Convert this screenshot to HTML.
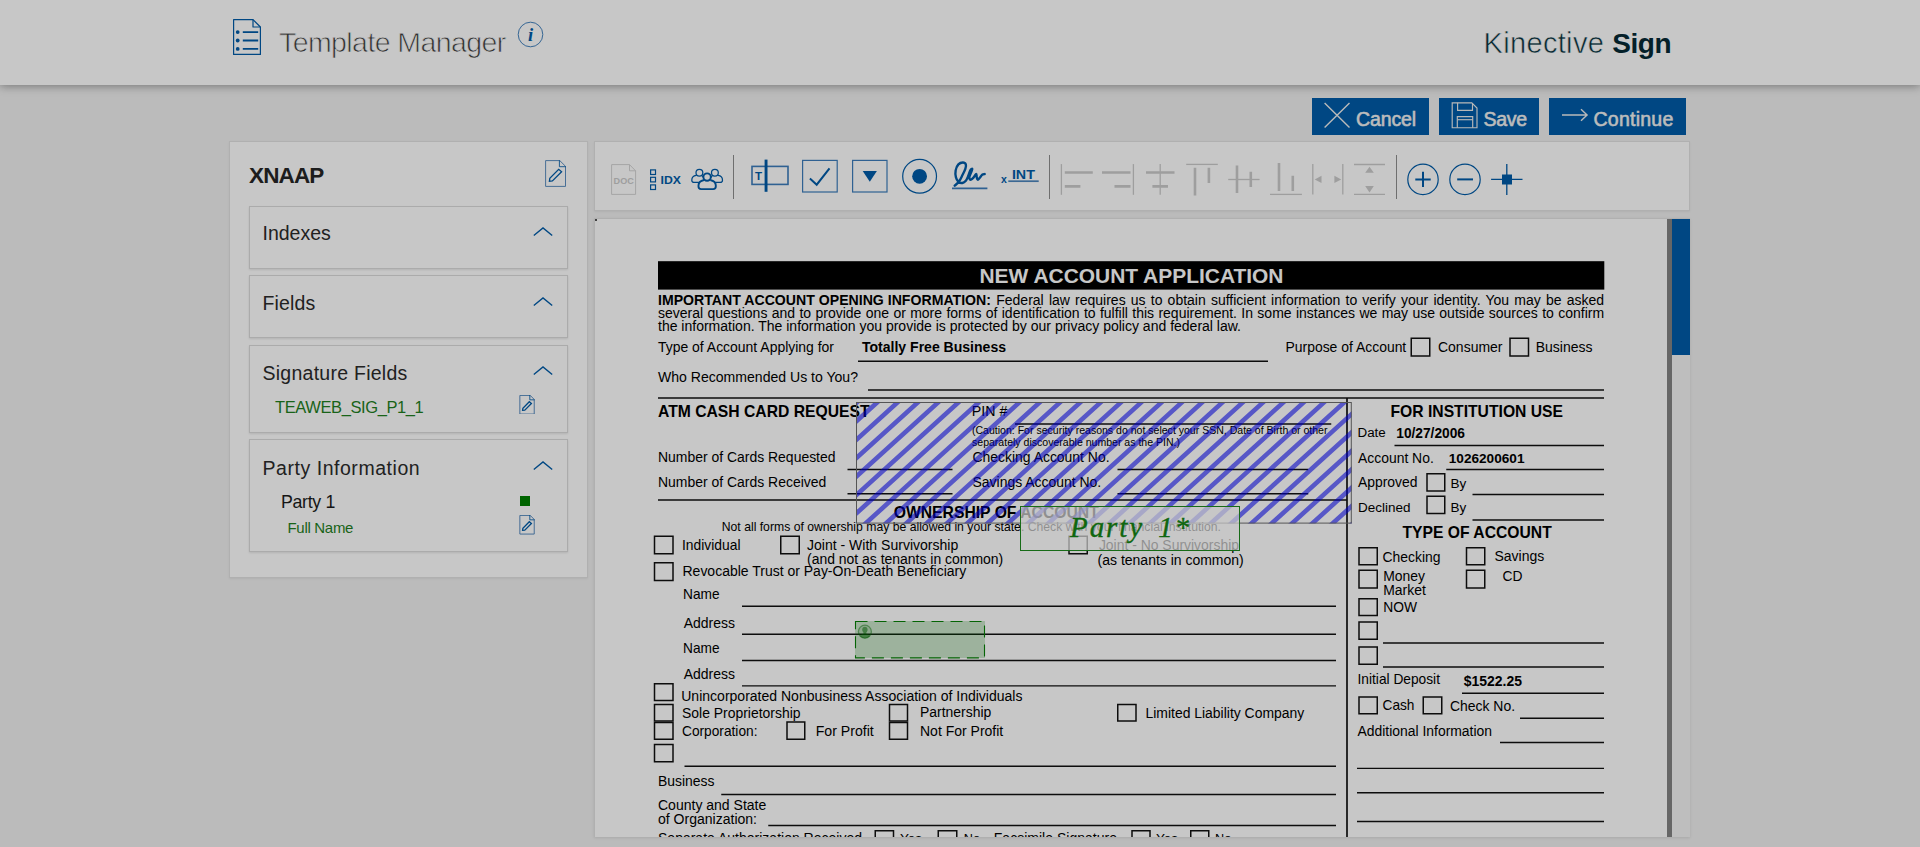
<!DOCTYPE html><html lang="en"><head><meta charset="utf-8"><title>Template Manager</title><style>
*{box-sizing:border-box}
html,body{margin:0;padding:0}
body{width:1920px;height:847px;overflow:hidden;position:relative;background:#f0f0f0;font-family:"Liberation Sans",sans-serif;color:#222}
.abs{position:absolute}
#hdr{left:0;top:0;width:1920px;height:85px;background:#fff;box-shadow:0 1px 9px rgba(0,0,0,.38)}
.t{position:absolute;white-space:nowrap;line-height:1;}
.btn{position:absolute;top:98px;height:37px;background:#015ca8;color:#fff}
.btn .t{font-size:19.5px;font-weight:normal;color:#f1f1f1;-webkit-text-stroke:.55px #f1f1f1}
.panel{position:absolute;background:#fff;border:1px solid #e2e2e2;box-shadow:0 1px 2px rgba(0,0,0,.06)}
.box{position:absolute;left:249px;width:319px;border:1px solid #dcdcdc;background:#fff;box-shadow:0 1px 2px rgba(0,0,0,.10)}
.sep{position:absolute;top:155px;width:1.4px;height:44px;background:#8f8f8f}
</style></head><body>
<div id="hdr" class="abs">
<svg class="abs" style="left:232px;top:18px" width="30" height="38" viewBox="0 0 30 38" fill="none" stroke="#015ca8" stroke-width="1.2" stroke-linejoin="round"><path d="M21 1.6H1.6v34.8h26.8V9z"/><path d="M21 1.6V9h7.4"/><g stroke-width="1.8"><path d="M10.800 14.100h15.400M10.800 22.500h15.400M10.800 30.900h15.400"/></g><g fill="#015ca8" stroke="none"><circle cx="5.700" cy="14.100" r="1.900"/><circle cx="5.700" cy="22.500" r="1.900"/><circle cx="5.700" cy="30.900" r="1.900"/></g></svg>
<span class="t" id="ttl" style="left:279px;top:28.3px;font-size:28.5px;color:#3f3f3f;-webkit-text-stroke:.75px #fff;letter-spacing:-.58px">Template Manager</span>
<svg class="abs" style="left:516.900px;top:20.500px" width="27" height="27" viewBox="0 0 27 27"><circle cx="13.5" cy="13.5" r="12.300" fill="none" stroke="#2f74b5" stroke-width=".9"/><text x="13.500" y="19.600" text-anchor="middle" font-family="'Liberation Serif',serif" font-style="italic" font-weight="bold" font-size="18.500" fill="#015ca8">i</text></svg>
<span class="t" id="kin" style="left:1483.6px;top:28.75px;font-size:29px;color:#0a3440;-webkit-text-stroke:.55px #fff;letter-spacing:.32px">Kinective</span>
<span class="t" id="sgn" style="left:1612.2px;top:29.6px;font-size:28px;font-weight:bold;color:#062a35;letter-spacing:-.4px">Sign</span>
</div>
<div class="btn" style="left:1312px;width:117px"><svg class="abs" style="left:11px;top:4px" width="28" height="27" viewBox="0 0 28 27" stroke="#eee" stroke-width="1.4" fill="none"><path d="M1.6 .9l24.900 24.500M26.500 .9L1.600 25.400"/></svg><span class="t" id="b1" style="left:44px;top:12.3px;letter-spacing:-.1px">Cancel</span></div>
<div class="btn" style="left:1439px;width:100px"><svg class="abs" style="left:12px;top:4px" width="27" height="27" viewBox="0 0 27 27" stroke="#ececec" stroke-width="1.15" fill="none" stroke-linejoin="miter"><path d="M1.2 .8h19.600l5.200 5.200v19.700H1.200z"/><path d="M6.600 .8v7.600h14.900V1.500"/><path d="M6.300 25.700V14.600h15.400v11.100"/><path d="M6.300 17.700h15.400"/></svg><span class="t" id="b2" style="left:44.5px;top:12.3px;letter-spacing:-.3px">Save</span></div>
<div class="btn" style="left:1549px;width:137px"><svg class="abs" style="left:12.700px;top:10px" width="27" height="14" viewBox="0 0 27 14" stroke="#eee" stroke-width="1.4" fill="none"><path d="M0 7h25M19 1.300l6.100 5.700-6.100 5.700"/></svg><span class="t" id="b3" style="left:44.5px;top:12.3px;letter-spacing:.25px">Continue</span></div>
<div class="panel" style="left:229px;top:141px;width:359px;height:437px"></div>
<span class="t" id="xn" style="left:249px;top:165.3px;font-size:22.5px;font-weight:bold;color:#262626;letter-spacing:-.85px">XNAAP</span>
<svg style="position:absolute;left:545px;top:160px" width="21" height="27" viewBox="0 0 21 27" fill="none" stroke="#3f7ab5" stroke-width="0.85" stroke-linejoin="round" stroke-linecap="round"><path d="M14.400 .6H.6v25.800h19.900V6.700z"/><path d="M14.400 .6v6.100h6.100" stroke="#015ca8"/><path d="M4.400 21.300L4.800 18.300 13.700 9.300 16.600 11.800 7.400 21z" stroke="#015ca8" stroke-width="1.275" stroke-linejoin="miter"/></svg>
<div class="box" style="top:206px;height:63px"></div>
<div class="box" style="top:275px;height:63px"></div>
<div class="box" style="top:345px;height:88px"></div>
<div class="box" style="top:439px;height:113px"></div>
<span class="t" id="l1" style="left:262.5px;top:224.39px;font-size:19.5px;color:#2b2b2b;">Indexes</span>
<span class="t" id="l2" style="left:262.5px;top:294.39px;font-size:19.5px;color:#2b2b2b;letter-spacing:.15px">Fields</span>
<span class="t" id="l3" style="left:262.5px;top:363.79px;font-size:19.5px;color:#2b2b2b;letter-spacing:.26px">Signature Fields</span>
<span class="t" id="l4" style="left:262.5px;top:458.79px;font-size:19.5px;color:#2b2b2b;letter-spacing:.54px">Party Information</span>
<span class="t" id="l5" style="left:275px;top:398.93px;font-size:16.5px;color:#1f7f1f;letter-spacing:-.4px">TEAWEB_SIG_P1_1</span>
<span class="t" id="l6" style="left:281px;top:493.77px;font-size:17.75px;color:#1c1c1c;letter-spacing:-.3px">Party 1</span>
<span class="t" id="l7" style="left:287.5px;top:520.20px;font-size:15px;color:#1f7f1f;letter-spacing:-.3px">Full Name</span>
<svg style="position:absolute;left:533px;top:226.5px" width="20" height="10" viewBox="0 0 20 10" fill="none" stroke="#015ca8" stroke-width="1.35"><path d="M.8 8.6L10 .9l9.2 7.7"/></svg>
<svg style="position:absolute;left:533px;top:296.5px" width="20" height="10" viewBox="0 0 20 10" fill="none" stroke="#015ca8" stroke-width="1.35"><path d="M.8 8.6L10 .9l9.2 7.7"/></svg>
<svg style="position:absolute;left:533px;top:366px" width="20" height="10" viewBox="0 0 20 10" fill="none" stroke="#015ca8" stroke-width="1.35"><path d="M.8 8.6L10 .9l9.2 7.7"/></svg>
<svg style="position:absolute;left:533px;top:460.5px" width="20" height="10" viewBox="0 0 20 10" fill="none" stroke="#015ca8" stroke-width="1.35"><path d="M.8 8.6L10 .9l9.2 7.7"/></svg>
<svg style="position:absolute;left:519px;top:394.5px" width="16" height="19.5" viewBox="0 0 21 27" fill="none" stroke="#3f7ab5" stroke-width="1.2" stroke-linejoin="round" stroke-linecap="round"><path d="M14.400 .6H.6v25.800h19.900V6.700z"/><path d="M14.400 .6v6.100h6.100" stroke="#015ca8"/><path d="M4.400 21.300L4.800 18.300 13.700 9.300 16.600 11.800 7.400 21z" stroke="#015ca8" stroke-width="1.7999999999999998" stroke-linejoin="miter"/></svg>
<svg style="position:absolute;left:519px;top:515px" width="16" height="19.5" viewBox="0 0 21 27" fill="none" stroke="#3f7ab5" stroke-width="1.2" stroke-linejoin="round" stroke-linecap="round"><path d="M14.400 .6H.6v25.800h19.900V6.700z"/><path d="M14.400 .6v6.100h6.100" stroke="#015ca8"/><path d="M4.400 21.300L4.800 18.300 13.700 9.300 16.600 11.800 7.400 21z" stroke="#015ca8" stroke-width="1.7999999999999998" stroke-linejoin="miter"/></svg>
<div class="abs" style="left:520px;top:496px;width:10px;height:10px;background:#008000"></div>
<div class="panel" style="left:594px;top:141px;width:1096px;height:70px"></div>
<svg class="abs" style="left:595px;top:142px" width="1096" height="70" viewBox="595 142 1096 70" fill="none" font-family="'Liberation Sans',sans-serif">
<g stroke="#d2d2d2" stroke-width=".95" stroke-linejoin="round"><path d="M611.6 164.6H629.5L635.6 170.8V194.4H611.6z"/><path d="M629.5 164.6V170.8H635.6"/></g>
<text x="613.6" y="183.6" font-size="8.8" font-weight="bold" fill="#cbcbcb" textLength="20.2" lengthAdjust="spacingAndGlyphs">DOC</text>
<g stroke="#015ca8" stroke-width="1.2"><rect x="650.6" y="169.9" width="4.9" height="4.6"/><rect x="650.6" y="177.3" width="4.9" height="4.6"/><rect x="650.6" y="184.9" width="4.9" height="4.6"/></g>
<text x="660.6" y="183.8" font-size="11.3" font-weight="bold" fill="#015ca8" textLength="20.4" lengthAdjust="spacingAndGlyphs">IDX</text>
<g stroke="#015ca8" stroke-width="1.25" stroke-linejoin="round" stroke-linecap="round">
<circle cx="699.4" cy="172.8" r="3.4"/><circle cx="714.9" cy="172.8" r="3.4"/>
<path d="M698.5 182.4H694.2C692.6 182.4 691.8 181.600 691.8 180.200 691.8 177.600 693.600 175.700 696.200 175.400"/>
<path d="M715.800 182.400H720.100C721.700 182.400 722.500 181.600 722.500 180.200 722.500 177.600 720.700 175.700 718.100 175.400"/>
<path d="M701.900 175.600C702.500 176.200 702.900 176.700 703.200 177.300M712.400 175.600C711.800 176.200 711.400 176.700 711.100 177.300"/>
</g>
<g stroke="#015ca8" stroke-width="1.9" stroke-linejoin="round"><circle cx="707.1" cy="177.1" r="3.700"/>
<path d="M704 180C700.600 180.700 698.500 182.900 698.500 185.400V186.600C698.500 188.200 699.500 189.100 701.100 189.100H713.200C714.800 189.100 715.800 188.200 715.800 186.600V185.400C715.800 182.900 713.700 180.700 710.300 180"/></g>
<rect x="752" y="166.4" width="36" height="18" stroke="#3d7dbb" stroke-width="1.6"/><rect x="764.600" y="159.600" width="2.900" height="32.200" fill="#015ca8"/>
<text x="754.900" y="179.900" font-size="11.500" font-weight="bold" fill="#015ca8">T</text>
<rect x="802.6" y="160.4" width="34.6" height="31.6" stroke="#3d7dbb" stroke-width="1.2"/><path d="M809.9 178.6L816.7 184.7L829.5 168.4" stroke="#015ca8" stroke-width="2"/>
<rect x="852.6" y="160.4" width="34.4" height="31.600" stroke="#3d7dbb" stroke-width="1.2"/><path d="M862.7 170.9H876.900L869.800 181.700z" fill="#015ca8"/>
<circle cx="919.6" cy="176.3" r="16.9" stroke="#015ca8" stroke-width="1.2"/><circle cx="919.6" cy="176.300" r="7.400" fill="#015ca8"/>
<path d="M952 188.400H987.400" stroke="#3d7dbb" stroke-width="1.800"/>
<path d="M954.68 185.73C955.38 185.07 957.61 183.50 958.89 181.76C960.17 180.03 961.29 177.47 962.36 175.32C963.44 173.17 964.76 170.69 965.34 168.87C965.91 167.06 966.24 165.49 965.83 164.41C965.42 163.34 964.10 162.43 962.86 162.43C961.62 162.43 959.59 163.09 958.39 164.41C957.20 165.73 956.08 168.21 955.67 170.36C955.25 172.51 955.46 175.40 955.92 177.30C956.37 179.20 957.32 180.81 958.39 181.76C959.47 182.71 961.12 183.17 962.36 183.00C963.60 182.84 964.84 181.97 965.83 180.77C966.82 179.57 967.57 177.55 968.31 175.81C969.05 174.08 969.63 171.52 970.29 170.36C970.95 169.20 972.11 168.63 972.28 168.87C972.44 169.12 971.78 170.44 971.29 171.85C970.79 173.25 969.38 175.98 969.30 177.30C969.22 178.62 970.05 179.78 970.79 179.78C971.53 179.78 972.86 178.29 973.76 177.30C974.67 176.31 975.75 173.83 976.24 173.83C976.74 173.83 976.49 176.31 976.74 177.30C976.99 178.29 977.15 179.78 977.73 179.78C978.31 179.78 979.47 178.13 980.21 177.30C980.95 176.48 981.45 175.36 982.19 174.82C982.94 174.29 984.26 174.20 984.67 174.08" stroke="#015ca8" stroke-width="2.4" stroke-linecap="round" stroke-linejoin="round"/>
<text x="1001" y="182.700" font-size="10.500" font-weight="bold" fill="#015ca8">x</text>
<text x="1011.900" y="178.700" font-size="13.700" font-weight="bold" fill="#015ca8" textLength="23" lengthAdjust="spacingAndGlyphs">INT</text>
<path d="M1008.300 181.200H1038.700" stroke="#4d86bd" stroke-width="1.700"/>
<g stroke="#cbcbcb">
<path d="M1061.4 164.100V194.800" stroke-width="1.300"/><path d="M1064.800 172.500H1092.800M1064.800 186.400H1080.400" stroke-width="2.600"/>
<path d="M1133.4 164.100V194.800" stroke-width="1.300"/><path d="M1102 172.500H1130.500M1114.500 186.400H1130.500" stroke-width="2.600"/>
<path d="M1160.2 164.100V194.800" stroke-width="1.300"/><path d="M1146 172.500H1174.500M1152.400 186.400H1168" stroke-width="2.600"/>
<path d="M1186.2 164.400H1217.800" stroke-width="1.300"/><path d="M1195 167.800V195.500M1208.900 167.800V183" stroke-width="2.600"/>
<path d="M1228.2 179.500H1259.600" stroke-width="1.300"/><path d="M1237 165.500V193M1250.800 171.800V187" stroke-width="2.600"/>
<path d="M1270 194.400H1301.900" stroke-width="1.300"/><path d="M1279 163V191M1292.800 175.700V191" stroke-width="2.600"/>
<path d="M1312.800 164V194.400M1342.800 164V194.400" stroke-width="1.300"/>
<path d="M1354 164.500H1385M1354 194.400H1385" stroke-width="1.300"/>
</g>
<g fill="#cbcbcb"><path d="M1314.700 179.400L1321.500 175.700V183.100z"/><path d="M1341.200 179.400L1334.400 175.700V183.100z"/><path d="M1369.500 166.700L1373.800 172.800H1365.200z"/><path d="M1369.500 192.500L1373.800 186H1365.200z"/></g>
<g stroke="#015ca8"><circle cx="1423" cy="179.400" r="15.200" stroke-width="1.200"/><path d="M1415.300 179.400H1430.700M1423 171.700V187.100" stroke-width="2"/>
<circle cx="1465" cy="179.400" r="15.200" stroke-width="1.200"/><path d="M1457.200 179.400H1473" stroke-width="2"/>
<path d="M1491.100 179.400H1522.500M1506.800 164V195" stroke-width="1.300"/></g><rect x="1502" y="174.500" width="10" height="10" fill="#015ca8"/>
</svg>
<div class="sep" style="left:732.8px"></div>
<div class="sep" style="left:1048.9px"></div>
<div class="sep" style="left:1395.8px"></div>
<div class="abs" style="left:594px;top:218px;width:1096px;height:619px;background:#fff;border-left:1px solid #e2e2e2;border-top:1px solid #e2e2e2;overflow:hidden;box-shadow:0 1px 3px rgba(0,0,0,.10)">
<div class="abs" style="left:0;top:0;width:1072px;height:618px;background:#fff;overflow:hidden">
<svg width="1072" height="618" viewBox="595 219 1072 618" style="position:absolute;left:0;top:0;display:block" font-family="'Liberation Sans',sans-serif" fill="#000">
<rect x="658" y="261.2" width="946.3" height="28.4" fill="#000"/>
<g stroke="#111" fill="none">
<line x1="858" y1="361.25" x2="1268" y2="361.25" stroke-width="1.4"/>
<line x1="868" y1="390" x2="1604" y2="390" stroke-width="1.4"/>
<line x1="658" y1="398" x2="1604" y2="398" stroke-width="1.7"/>
<line x1="1015" y1="424" x2="1331.25" y2="424" stroke-width="1.4"/>
<line x1="1394.5" y1="445.5" x2="1604" y2="445.5" stroke-width="1.4"/>
<line x1="847.5" y1="469.5" x2="952.5" y2="469.5" stroke-width="1.4"/>
<line x1="1117.5" y1="469.5" x2="1308.25" y2="469.5" stroke-width="1.4"/>
<line x1="1446.25" y1="469.5" x2="1604" y2="469.5" stroke-width="1.4"/>
<line x1="847.5" y1="493.75" x2="952.5" y2="493.75" stroke-width="1.4"/>
<line x1="1117.5" y1="493.75" x2="1308.25" y2="493.75" stroke-width="1.4"/>
<line x1="1472.5" y1="494.5" x2="1604" y2="494.5" stroke-width="1.4"/>
<line x1="658" y1="500" x2="1347" y2="500" stroke-width="1.7"/>
<line x1="1472.5" y1="520" x2="1604" y2="520" stroke-width="1.4"/>
<line x1="742" y1="606.25" x2="1336" y2="606.25" stroke-width="1.4"/>
<line x1="742" y1="634.25" x2="1336" y2="634.25" stroke-width="1.4"/>
<line x1="742" y1="660.5" x2="1336" y2="660.5" stroke-width="1.4"/>
<line x1="742" y1="685.9" x2="1336" y2="685.9" stroke-width="1.4"/>
<line x1="684.5" y1="766.2" x2="1336" y2="766.2" stroke-width="1.4"/>
<line x1="721.25" y1="794.5" x2="1336" y2="794.5" stroke-width="1.4"/>
<line x1="768.25" y1="825.5" x2="1336" y2="825.5" stroke-width="1.4"/>
<line x1="1383" y1="643" x2="1604" y2="643" stroke-width="1.4"/>
<line x1="1383" y1="667" x2="1604" y2="667" stroke-width="1.4"/>
<line x1="1462" y1="693.25" x2="1604" y2="693.25" stroke-width="1.4"/>
<line x1="1520" y1="718.25" x2="1604" y2="718.25" stroke-width="1.4"/>
<line x1="1500" y1="742.5" x2="1604" y2="742.5" stroke-width="1.4"/>
<line x1="1357" y1="768.4" x2="1604" y2="768.4" stroke-width="1.4"/>
<line x1="1357" y1="792.8" x2="1604" y2="792.8" stroke-width="1.4"/>
<line x1="1357" y1="821.5" x2="1604" y2="821.5" stroke-width="1.4"/>
<line x1="1347" y1="398" x2="1347" y2="860" stroke-width="1.7"/>
</g><g stroke="#111" stroke-width="1.5" fill="none">
<rect x="1411.25" y="338.25" width="18.50" height="17.75"/>
<rect x="1510.00" y="338.25" width="18.50" height="17.75"/>
<rect x="654.50" y="536.25" width="18.50" height="17.50"/>
<rect x="780.75" y="536.25" width="18.50" height="17.50"/>
<rect x="1069.00" y="536.25" width="18.25" height="17.50"/>
<rect x="654.50" y="562.75" width="18.50" height="17.75"/>
<rect x="1427.00" y="473.75" width="17.75" height="17.25"/>
<rect x="1427.00" y="496.25" width="17.75" height="17.25"/>
<rect x="1359.00" y="547.75" width="18.25" height="17.00"/>
<rect x="1466.50" y="547.75" width="18.25" height="17.00"/>
<rect x="1359.00" y="570.25" width="18.25" height="17.75"/>
<rect x="1466.50" y="570.25" width="18.25" height="17.75"/>
<rect x="1359.00" y="598.75" width="18.25" height="16.75"/>
<rect x="1359.00" y="622.00" width="18.25" height="17.25"/>
<rect x="1359.00" y="647.00" width="18.25" height="17.25"/>
<rect x="1359.00" y="697.00" width="18.25" height="16.75"/>
<rect x="1423.25" y="697.00" width="18.50" height="16.75"/>
<rect x="654.50" y="683.75" width="18.50" height="16.75"/>
<rect x="654.50" y="704.50" width="18.50" height="16.50"/>
<rect x="889.50" y="704.50" width="18.00" height="16.50"/>
<rect x="1117.75" y="704.50" width="18.25" height="16.50"/>
<rect x="654.50" y="722.50" width="18.50" height="16.75"/>
<rect x="787.00" y="722.00" width="17.75" height="17.25"/>
<rect x="889.50" y="722.50" width="18.00" height="16.75"/>
<rect x="654.50" y="744.50" width="18.50" height="17.25"/>
<rect x="875.25" y="830.75" width="18.25" height="17.50"/>
<rect x="938.25" y="830.75" width="18.50" height="17.50"/>
<rect x="1132.00" y="830.75" width="18.00" height="17.50"/>
<rect x="1190.75" y="830.75" width="18.00" height="17.50"/>
</g>
<text x="979.5" y="283" font-size="21.0" textLength="304.00" lengthAdjust="spacingAndGlyphs" font-weight="bold" fill="#fff">NEW ACCOUNT APPLICATION</text>
<text x="658" y="304.5" font-size="14" textLength="333.00" lengthAdjust="spacingAndGlyphs" font-weight="bold">IMPORTANT ACCOUNT OPENING INFORMATION:</text>
<text x="996.25" y="304.5" font-size="14" word-spacing="1.281">Federal law requires us to obtain sufficient information to verify your identity. You may be asked</text>
<text x="658" y="317.6" font-size="14" word-spacing="0.447">several questions and to provide one or more forms of identification to fulfill this requirement. In some instances we may use outside sources to confirm</text>
<text x="658" y="330.75" font-size="14" textLength="583.00" lengthAdjust="spacingAndGlyphs">the information. The information you provide is protected by our privacy policy and federal law.</text>
<text x="658" y="352" font-size="14.0" textLength="176.00" lengthAdjust="spacingAndGlyphs">Type of Account Applying for</text>
<text x="862" y="352" font-size="14.0" textLength="144.00" lengthAdjust="spacingAndGlyphs" font-weight="bold">Totally Free Business</text>
<text x="1285.5" y="352" font-size="14.0" textLength="120.75" lengthAdjust="spacingAndGlyphs">Purpose of Account</text>
<text x="1438" y="352" font-size="14.0" textLength="64.50" lengthAdjust="spacingAndGlyphs">Consumer</text>
<text x="1535.75" y="352" font-size="14.0" textLength="56.75" lengthAdjust="spacingAndGlyphs">Business</text>
<text x="658" y="382.3" font-size="14.0" textLength="200.00" lengthAdjust="spacingAndGlyphs">Who Recommended Us to You?</text>
<text x="658" y="417" font-size="15.75" textLength="211.50" lengthAdjust="spacingAndGlyphs" font-weight="bold">ATM CASH CARD REQUEST</text>
<text x="971.8" y="416.4" font-size="14.25" textLength="35.50" lengthAdjust="spacingAndGlyphs">PIN #</text>
<text x="972" y="433.8" font-size="10.5" textLength="355.50" lengthAdjust="spacingAndGlyphs">(Caution: For security reasons do not select your SSN, Date of Birth or other</text>
<text x="972" y="446.25" font-size="10.5" textLength="208.00" lengthAdjust="spacingAndGlyphs">separately discoverable number as the PIN.)</text>
<text x="1390.5" y="417" font-size="15.75" textLength="172.50" lengthAdjust="spacingAndGlyphs" font-weight="bold">FOR INSTITUTION USE</text>
<text x="1357.5" y="437" font-size="13.25" textLength="28.25" lengthAdjust="spacingAndGlyphs">Date</text>
<text x="1396.25" y="437.5" font-size="13.75" textLength="68.75" lengthAdjust="spacingAndGlyphs" font-weight="bold">10/27/2006</text>
<text x="658" y="462" font-size="14.0" textLength="177.50" lengthAdjust="spacingAndGlyphs">Number of Cards Requested</text>
<text x="658" y="487" font-size="14.0" textLength="168.25" lengthAdjust="spacingAndGlyphs">Number of Cards Received</text>
<text x="972.5" y="462" font-size="14.0" textLength="137.00" lengthAdjust="spacingAndGlyphs">Checking Account No.</text>
<text x="972.5" y="487" font-size="14.0" textLength="128.75" lengthAdjust="spacingAndGlyphs">Savings Account No.</text>
<text x="1358" y="462.5" font-size="14.0" textLength="75.75" lengthAdjust="spacingAndGlyphs">Account No.</text>
<text x="1448.75" y="462.5" font-size="13.5" textLength="75.75" lengthAdjust="spacingAndGlyphs" font-weight="bold">1026200601</text>
<text x="1358" y="487" font-size="14.0" textLength="59.50" lengthAdjust="spacingAndGlyphs">Approved</text>
<text x="1450.5" y="487.5" font-size="13.5" textLength="15.75" lengthAdjust="spacingAndGlyphs">By</text>
<text x="1358" y="512" font-size="13.5" textLength="52.50" lengthAdjust="spacingAndGlyphs">Declined</text>
<text x="1450.5" y="512" font-size="13.5" textLength="15.75" lengthAdjust="spacingAndGlyphs">By</text>
<text x="893.75" y="518" font-size="15.75" textLength="205.00" lengthAdjust="spacingAndGlyphs" font-weight="bold">OWNERSHIP OF ACCOUNT</text>
<text x="721.75" y="530.5" font-size="12.25" textLength="499.25" lengthAdjust="spacingAndGlyphs">Not all forms of ownership may be allowed in your state. Check with your financial institution.</text>
<text x="1402.5" y="537.5" font-size="15.75" textLength="149.25" lengthAdjust="spacingAndGlyphs" font-weight="bold">TYPE OF ACCOUNT</text>
<text x="682" y="550" font-size="13.75" textLength="58.50" lengthAdjust="spacingAndGlyphs">Individual</text>
<text x="807" y="550" font-size="14.0" textLength="151.25" lengthAdjust="spacingAndGlyphs">Joint - With Survivorship</text>
<text x="807" y="564.25" font-size="14.0" textLength="196.25" lengthAdjust="spacingAndGlyphs">(and not as tenants in common)</text>
<text x="1098.9" y="550" font-size="14.0" textLength="140.10" lengthAdjust="spacingAndGlyphs">Joint - No Survivorship</text>
<text x="1097.6" y="565.3" font-size="14.0" textLength="146.15" lengthAdjust="spacingAndGlyphs">(as tenants in common)</text>
<text x="682.5" y="576.25" font-size="14.0" textLength="283.75" lengthAdjust="spacingAndGlyphs">Revocable Trust or Pay-On-Death Beneficiary</text>
<text x="683" y="598.75" font-size="13.75" textLength="36.50" lengthAdjust="spacingAndGlyphs">Name</text>
<text x="683.75" y="627.5" font-size="14.0" textLength="51.25" lengthAdjust="spacingAndGlyphs">Address</text>
<text x="683" y="653" font-size="13.75" textLength="36.50" lengthAdjust="spacingAndGlyphs">Name</text>
<text x="683.75" y="678.75" font-size="14.0" textLength="51.25" lengthAdjust="spacingAndGlyphs">Address</text>
<text x="681.25" y="700.75" font-size="14.0" textLength="341.25" lengthAdjust="spacingAndGlyphs">Unincorporated Nonbusiness Association of Individuals</text>
<text x="682" y="717.5" font-size="14.0" textLength="118.50" lengthAdjust="spacingAndGlyphs">Sole Proprietorship</text>
<text x="920" y="717" font-size="14.0" textLength="71.25" lengthAdjust="spacingAndGlyphs">Partnership</text>
<text x="1145.5" y="717.5" font-size="14.0" textLength="158.75" lengthAdjust="spacingAndGlyphs">Limited Liability Company</text>
<text x="682" y="735.5" font-size="13.75" textLength="75.50" lengthAdjust="spacingAndGlyphs">Corporation:</text>
<text x="815.75" y="735.5" font-size="14.0" textLength="58.00" lengthAdjust="spacingAndGlyphs">For Profit</text>
<text x="920" y="735.5" font-size="14.0" textLength="83.25" lengthAdjust="spacingAndGlyphs">Not For Profit</text>
<text x="658" y="785.75" font-size="14.0" textLength="56.50" lengthAdjust="spacingAndGlyphs">Business</text>
<text x="658" y="810" font-size="14.0" textLength="108.25" lengthAdjust="spacingAndGlyphs">County and State</text>
<text x="658" y="823.75" font-size="14.0" textLength="99.00" lengthAdjust="spacingAndGlyphs">of Organization:</text>
<text x="658" y="843.3" font-size="14.0" textLength="204.00" lengthAdjust="spacingAndGlyphs">Separate Authorization Received</text>
<text x="900" y="843.3" font-size="13.5" textLength="22.00" lengthAdjust="spacingAndGlyphs">Yes</text>
<text x="963.75" y="843.3" font-size="12.75" textLength="16.25" lengthAdjust="spacingAndGlyphs">No</text>
<text x="993.75" y="843.3" font-size="14.0" textLength="123.25" lengthAdjust="spacingAndGlyphs">Facsimile Signature</text>
<text x="1156" y="843.3" font-size="13.5" textLength="22.00" lengthAdjust="spacingAndGlyphs">Yes</text>
<text x="1215" y="843.3" font-size="12.75" textLength="16.25" lengthAdjust="spacingAndGlyphs">No</text>
<text x="1382.5" y="561.75" font-size="14.0" textLength="58.00" lengthAdjust="spacingAndGlyphs">Checking</text>
<text x="1494.5" y="560.5" font-size="14.0" textLength="49.75" lengthAdjust="spacingAndGlyphs">Savings</text>
<text x="1383.25" y="581.25" font-size="14.0" textLength="41.75" lengthAdjust="spacingAndGlyphs">Money</text>
<text x="1383.25" y="595.1" font-size="14.0" textLength="42.50" lengthAdjust="spacingAndGlyphs">Market</text>
<text x="1502.5" y="581.25" font-size="13.75" textLength="20.00" lengthAdjust="spacingAndGlyphs">CD</text>
<text x="1383.25" y="611.75" font-size="13.75" textLength="33.75" lengthAdjust="spacingAndGlyphs">NOW</text>
<text x="1357.5" y="683.75" font-size="13.75" textLength="82.50" lengthAdjust="spacingAndGlyphs">Initial Deposit</text>
<text x="1463.75" y="685.75" font-size="14.0" textLength="58.25" lengthAdjust="spacingAndGlyphs" font-weight="bold">$1522.25</text>
<text x="1382.5" y="710" font-size="13.75" textLength="32.00" lengthAdjust="spacingAndGlyphs">Cash</text>
<text x="1450" y="710.75" font-size="14.0" textLength="65.00" lengthAdjust="spacingAndGlyphs">Check No.</text>
<text x="1357.5" y="735.75" font-size="14.0" textLength="134.50" lengthAdjust="spacingAndGlyphs">Additional Information</text>
</svg>
<svg class="abs" id="hatch" style="left:261.20px;top:183.00px" width="495.80" height="121.60" viewBox="0 0 495.80 121.60" fill="none"><defs><clipPath id="hc"><rect x="0" y="0" width="495.80" height="121.60"/></clipPath></defs><g clip-path="url(#hc)"><path d="M-147.56 135.01L593.25 -536.71M-138.39 145.12L602.41 -526.61M-129.23 155.22L611.57 -516.50M-120.07 165.32L620.74 -506.40M-110.91 175.43L629.90 -496.29M-101.75 185.53L639.06 -486.19M-92.58 195.64L648.22 -476.08M-83.42 205.74L657.38 -465.98M-74.26 215.85L666.55 -455.87M-65.10 225.95L675.71 -445.77M-55.93 236.06L684.87 -435.66M-46.77 246.16L694.03 -425.56M-37.61 256.27L703.20 -415.45M-28.45 266.37L712.36 -405.35M-19.28 276.47L721.52 -395.25M-10.12 286.58L730.68 -385.14M-0.96 296.68L739.84 -375.04M8.20 306.79L749.01 -364.93M17.36 316.89L758.17 -354.83M26.53 327.00L767.33 -344.72M35.69 337.10L776.49 -334.62M44.85 347.21L785.66 -324.51M54.01 357.31L794.82 -314.41M63.18 367.42L803.98 -304.30M72.34 377.52L813.14 -294.20M81.50 387.63L822.30 -284.10M90.66 397.73L831.47 -273.99M99.82 407.83L840.63 -263.89M108.99 417.94L849.79 -253.78M118.15 428.04L858.95 -243.68M127.31 438.15L868.12 -233.57M136.47 448.25L877.28 -223.47" stroke="rgba(0,0,255,.56)" stroke-width="4.6"/></g><rect x=".5" y=".5" width="494.80" height="120.60" stroke="#6e6e6e" stroke-width="1"/></svg>
<div class="abs" id="sign" style="left:424.6px;top:287.2px;width:220.4px;height:44.5px;border:1px solid #1e8a1e;background:rgba(255,255,255,.72)"><span class="t" id="p1" style="left:49.5px;top:6px;word-spacing:5px;font-family:'Liberation Serif','DejaVu Serif',serif;font-style:italic;font-size:29px;color:#148414;-webkit-text-stroke:.35px #148414;letter-spacing:1.9px">Party 1*</span></div>
<div class="abs" id="gfield" style="left:260.2px;top:401.8px;width:130px;height:37.2px;background:rgba(0,128,0,.21)"></div>
<svg class="abs" style="left:259.2px;top:400.8px" width="133" height="40" viewBox="0 0 133 40" fill="none"><rect x="1.500" y="1.500" width="129" height="36.400" stroke="#078007" stroke-width="1.100" stroke-dasharray="12 7"/><circle cx="10.900" cy="11.700" r="6.500" fill="rgba(0,110,0,.10)" stroke="rgba(0,110,0,.45)" stroke-width="1.300"/><path transform="translate(.5 1.3)" d="M10.400 5.500c1.700 0 2.700 1.300 2.700 2.800 0 1.300-.600 2.400-1.300 3v1.200c2 .600 3.300 1.500 3.800 2.300a6.700 6.700 0 0 1-10.400 0c.500-.800 1.800-1.700 3.800-2.300v-1.200c-.700-.600-1.300-1.700-1.300-3 0-1.500 1-2.800 2.700-2.800z" fill="rgba(0,110,0,.5)"/></svg>
</div>
<div class="abs" style="left:1072px;top:0;width:23px;height:618px;background:#f4f4f4"></div>
<div class="abs" style="left:1072px;top:0;width:5px;height:618px;background:#838383"></div>
<div class="abs" style="left:1077px;top:0;width:18px;height:136px;background:#015ca8"></div>
<div class="abs" style="left:0;top:0;width:2px;height:2px;background:#555"></div>
</div>
<div class="abs" style="left:0;top:0;width:1920px;height:847px;background:rgba(0,0,0,.22)"></div>
</body></html>
